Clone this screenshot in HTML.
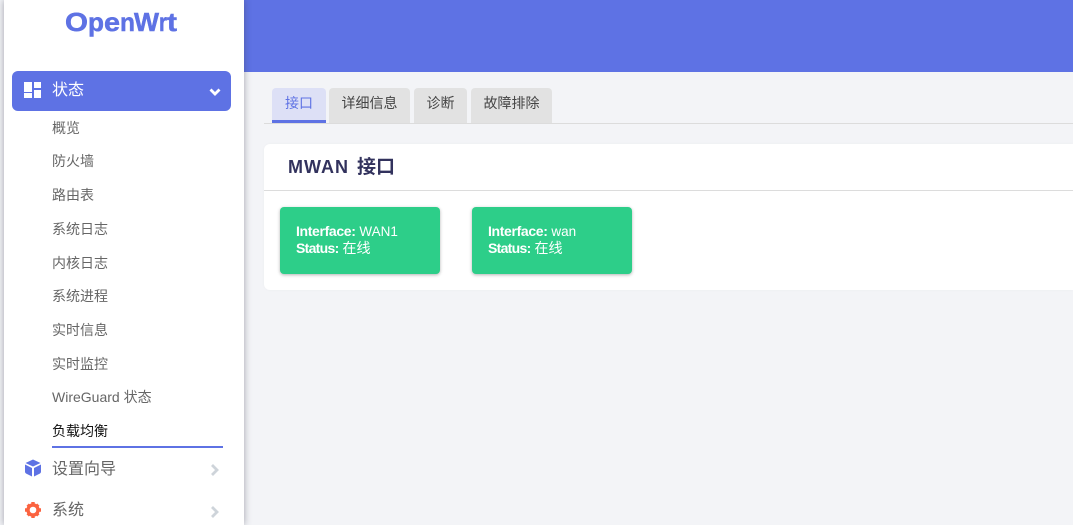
<!DOCTYPE html>
<html><head><meta charset="utf-8">
<style>
*{box-sizing:border-box}
html,body{margin:0;padding:0;width:1073px;height:525px;overflow:hidden;background:#f3f4f7;font-family:"Liberation Sans","Noto Sans CJK SC",sans-serif}
.a{position:absolute}
#side{left:4px;top:0;width:240px;height:525px;background:#fff;box-shadow:0 0 7px rgba(60,60,80,.45)}
#top{left:244px;top:0;width:829px;height:72px;background:#5e72e4}
#act{left:12px;top:71px;width:219px;height:40px;background:#5e72e4;border-radius:6px}
.m{position:absolute;left:52px;font-size:14px;line-height:20px;color:#666;white-space:nowrap}
.t{position:absolute;top:88px;height:35px;background:#e2e2e2;border-radius:4px 4px 0 0;font-size:14px;line-height:30px;text-align:center;color:#444}
.card{position:absolute;top:207px;width:160px;height:67px;background:#2dce89;border-radius:4px;box-shadow:0 1px 3px rgba(0,0,0,.3);color:#fff;font-size:14px;line-height:17px;padding:16px 16px}
.card b{font-weight:bold;letter-spacing:-.35px}
.card b.s{letter-spacing:-.7px}
.card i{font-style:normal;font-size:13.500px}
svg text{font-family:"Liberation Sans",sans-serif;font-weight:bold;font-size:26px;fill:#5e72e4;stroke:#5e72e4;stroke-width:.5px}
</style></head><body>
<div id="top" class="a"></div>
<div id="side" class="a"></div>
<svg class="a" style="left:0;top:0" width="244" height="45">
<text x="65" y="31" textLength="23" lengthAdjust="spacingAndGlyphs">O</text>
<text x="88" y="31" textLength="16" lengthAdjust="spacingAndGlyphs">p</text>
<text x="104" y="31" textLength="16" lengthAdjust="spacingAndGlyphs">e</text>
<text x="120" y="31" textLength="15" lengthAdjust="spacingAndGlyphs">n</text>
<text x="134" y="31" textLength="25" lengthAdjust="spacingAndGlyphs">W</text>
<text x="159" y="31" textLength="8" lengthAdjust="spacingAndGlyphs">r</text>
<text x="167" y="31" textLength="10" lengthAdjust="spacingAndGlyphs">t</text>
</svg>
<div id="act" class="a"></div>
<svg class="a" style="left:24px;top:82px" width="17" height="16"><path d="M0 0h8v10H0zM10 0h7v6h-7zM10 8h7v8h-7zM0 11h8v5H0z" fill="#fff"/></svg>
<div class="m" style="top:81px;font-size:16px;color:#fff">状态</div>
<svg class="a" style="left:208px;top:87px" width="14" height="10"><path d="M2.500 2.500L7 7l4.500-4.500" fill="none" stroke="#fff" stroke-width="2.800"/></svg>
<div class="m" style="top:118px">概览</div>
<div class="m" style="top:151px">防火墙</div>
<div class="m" style="top:185px">路由表</div>
<div class="m" style="top:219px">系统日志</div>
<div class="m" style="top:253px">内核日志</div>
<div class="m" style="top:286px">系统进程</div>
<div class="m" style="top:320px">实时信息</div>
<div class="m" style="top:354px">实时监控</div>
<div class="m" style="top:387px">WireGuard 状态</div>
<div class="m" style="top:421px;color:#111">负载均衡</div>
<div class="a" style="left:52px;top:446px;width:171px;height:2px;background:#5e72e4"></div>
<svg class="a" style="left:24px;top:459px" width="18" height="18"><path d="M9 0.500L16.500 4 9 7.500 1.500 4zM1 5.500L8 9v8.500L2 14.500a2 2 0 0 1-1-1.700zM17 5.500L10 9v8.500l6-3a2 2 0 0 0 1-1.700z" fill="#5e72e4"/></svg>
<div class="m" style="top:460px;font-size:16px">设置向导</div>
<svg class="a" style="left:209px;top:463px" width="12" height="14"><path d="M3 2l5 5-5 5" fill="none" stroke="#ced4da" stroke-width="2.800"/></svg>
<svg class="a" style="left:25px;top:502px" width="16" height="16"><circle cx="8" cy="8" r="5" fill="none" stroke="#fb6340" stroke-width="3.400"/><path d="M6.300 0h3.400v3H6.300zM6.300 13h3.400v3H6.300zM0 6.300h3v3.400H0zM13 6.300h3v3.400h-3zM1.500 3.800L3.800 1.500l2 2L3.500 5.800zM14.500 3.800L12.200 1.500l-2 2 2.300 2.300zM1.500 12.200l2.300 2.300 2-2-2.300-2.300zM14.500 12.200l-2.300 2.300-2-2 2.300-2.300z" fill="#fb6340"/></svg>
<div class="m" style="top:501px;font-size:16px">系统</div>
<svg class="a" style="left:209px;top:505px" width="12" height="14"><path d="M3 2l5 5-5 5" fill="none" stroke="#ced4da" stroke-width="2.800"/></svg>

<div class="a" style="left:264px;top:123px;width:809px;height:1px;background:#dcdcdc"></div>
<div class="t" style="left:272px;width:54px;background:#dde0f6;color:#5e72e4;border-bottom:3px solid #5e72e4">接口</div>
<div class="t" style="left:329px;width:81px">详细信息</div>
<div class="t" style="left:414px;width:53px">诊断</div>
<div class="t" style="left:471px;width:81px">故障排除</div>

<div class="a" style="left:264px;top:144px;width:809px;height:146px;background:#fff;border-radius:6px 0 0 6px;box-shadow:0 0 3px rgba(0,0,0,.03)"></div>
<div class="a" style="left:264px;top:190px;width:809px;height:1px;background:#dcdcdc"></div>
<div class="a" style="left:288px;top:155px;font-size:18px;line-height:24px;font-weight:bold;color:#32325d;letter-spacing:1px;white-space:nowrap">MWAN <span style="font-size:19px;letter-spacing:0;margin-left:2px">接口</span></div>

<div class="card" style="left:280px"><b>Interface:</b> <i>WAN1</i><br><b class="s">Status:</b> 在线</div>
<div class="card" style="left:472px"><b>Interface:</b> <i>wan</i><br><b class="s">Status:</b> 在线</div>
</body></html>
